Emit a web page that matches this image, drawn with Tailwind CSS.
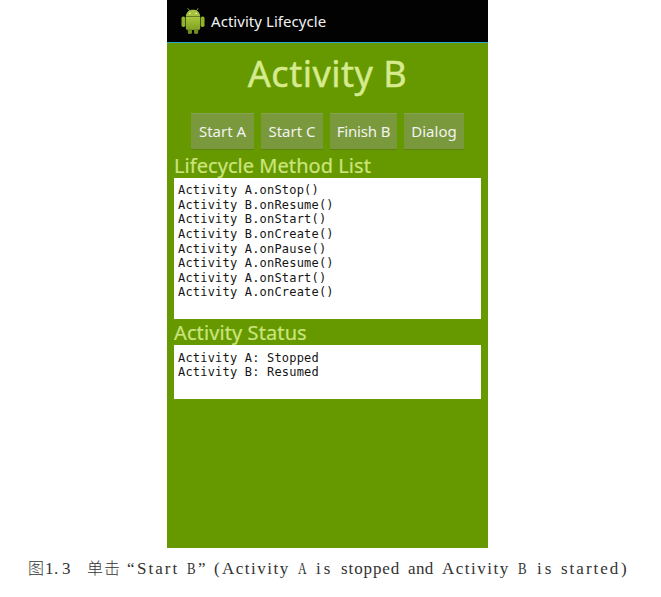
<!DOCTYPE html>
<html lang="zh">
<head>
<meta charset="utf-8">
<title>Activity Lifecycle</title>
<script src="https://cdn.jsdelivr.net/npm/@tailwindcss/browser@4"></script>
</head>
<body class="bg-white w-[661px] h-[597px] overflow-hidden">
<main class="ml-[167px] w-[321px] h-[548px] bg-[#669900] font-['Noto_Sans',sans-serif]">
  <header class="h-[43px] bg-[#020202] border-b border-[#2da5d3] flex items-center pl-[14px] gap-[6px]">
    <svg class="w-[24px] h-[28px] shrink-0" viewBox="0 0 23 28">
      <defs><linearGradient id="g" x1="0" x2="0" y1="0" y2="1"><stop offset="0" stop-color="#a9c83c"/><stop offset="1" stop-color="#7f9f21"/></linearGradient></defs>
      <path d="M6.500 1.500 8.300 4M16.500 1.500 14.700 4" stroke="#8ea735" stroke-width=".9" stroke-linecap="round"/>
      <path d="M4.300 9.600C4.600 5.300 7.500 2.800 11.500 2.800s6.900 2.500 7.200 6.800z" fill="#a5c23d"/>
      <circle cx="8.300" cy="6.500" r=".8" fill="#eef5d5"/><circle cx="14.700" cy="6.500" r=".8" fill="#eef5d5"/>
      <path d="M4.300 9.800h14.400v11.500a1.700 1.700 0 0 1-1.700 1.700H6a1.700 1.700 0 0 1-1.700-1.700z" fill="url(#g)"/>
      <rect x="0" y="9.500" width="3.800" height="10.500" rx="1.700" fill="#92b12c"/><rect x="19.200" y="9.500" width="3.800" height="10.500" rx="1.700" fill="#92b12c"/>
      <path d="M6.300 22h4.200v3.600a2.100 1.500 0 0 1-4.200 0zM12.500 22h4.200v3.600a2.100 1.500 0 0 1-4.200 0z" fill="#6f8b20"/>
    </svg>
    <h1 class="text-[15px] leading-[20px] tracking-[0.05px] text-[#f2f2f2]">Activity Lifecycle</h1>
  </header>
  <h2 class="h-[70px] pt-[6px] text-center text-[36px] leading-[50px] tracking-[0.5px] text-[#d5eb8e] [-webkit-text-stroke:0.45px_#d5eb8e]">Activity B</h2>
  <div class="flex gap-[7px] pl-[24px] h-[37px] text-[15px] text-[#f2f2f2]">
    <button class="w-[63px] h-[36px] bg-[#7a993d] border-t border-[#86a450] shadow-[0_1px_0_#5c8210]">Start A</button>
    <button class="w-[62px] h-[36px] bg-[#7a993d] border-t border-[#86a450] shadow-[0_1px_0_#5c8210]">Start C</button>
    <button class="w-[67px] h-[36px] bg-[#7a993d] border-t border-[#86a450] shadow-[0_1px_0_#5c8210] tracking-[-0.15px]">Finish B</button>
    <button class="w-[60px] h-[36px] bg-[#7a993d] border-t border-[#86a450] shadow-[0_1px_0_#5c8210]">Dialog</button>
  </div>
  <section class="px-[7px]">
    <h3 class="h-[28px] text-[20px] leading-[31px] tracking-[0.05px] text-[#cbe57e] [-webkit-text-stroke:0.2px_#cbe57e]">Lifecycle Method List</h3>
    <pre class="h-[141px] bg-white px-[4px] pt-[5.200px] text-[12px] leading-[14.6px] tracking-[0.19px] text-[#151515] font-['DejaVu_Sans_Mono',monospace]">Activity A.onStop()
Activity B.onResume()
Activity B.onStart()
Activity B.onCreate()
Activity A.onPause()
Activity A.onResume()
Activity A.onStart()
Activity A.onCreate()</pre>
    <h3 class="h-[26px] text-[20px] leading-[28px] tracking-[0.1px] text-[#cbe57e] [-webkit-text-stroke:0.2px_#cbe57e]">Activity Status</h3>
    <pre class="h-[54px] bg-white px-[4px] pt-[5.500px] text-[12px] leading-[14.6px] tracking-[0.19px] text-[#151515] font-['DejaVu_Sans_Mono',monospace]">Activity A: Stopped
Activity B: Resumed</pre>
  </section>
</main>
<p class="flex pl-[28px] pt-[9px] text-[17px] leading-[24px] text-[#333] whitespace-nowrap font-['Liberation_Serif','Noto_Sans_CJK_SC',serif]">
  <span class="w-[17px] shrink-0 text-[16px] leading-[21px] font-light font-['Noto_Sans_CJK_SC',sans-serif]">图</span>
  <span class="w-[42px] shrink-0 flex"><span class="w-[9px]">1</span><span class="w-[8px]">.</span><span>3</span></span>
  <span class="w-[38px] shrink-0 text-[16px] leading-[21px] tracking-[1px] font-light font-['Noto_Sans_CJK_SC',sans-serif]">单击</span>
  <span class="w-[12px] shrink-0 pl-[2px]">“</span>
  <span class="w-[50px] shrink-0 tracking-[2px]">Start</span>
  <span class="w-[11px] shrink-0"><span class="inline-block origin-left scale-x-[.76]">B</span></span>
  <span class="w-[16px] shrink-0">”</span>
  <span class="w-[8px] shrink-0">(</span>
  <span class="w-[76px] shrink-0 tracking-[1.500px]">Activity</span>
  <span class="w-[18px] shrink-0"><span class="inline-block origin-left scale-x-[.7]">A</span></span>
  <span class="w-[25px] shrink-0 tracking-[3px]">is</span>
  <span class="w-[67px] shrink-0 tracking-[.9px]">stopped</span>
  <span class="w-[34px] shrink-0 tracking-[.4px]">and</span>
  <span class="w-[76px] shrink-0 tracking-[1.500px]">Activity</span>
  <span class="w-[19px] shrink-0"><span class="inline-block origin-left scale-x-[.76]">B</span></span>
  <span class="w-[24px] shrink-0 tracking-[3px]">is</span>
  <span class="w-[60px] shrink-0 tracking-[2px]">started</span>
  <span>)</span>
</p>
</body>
</html>
